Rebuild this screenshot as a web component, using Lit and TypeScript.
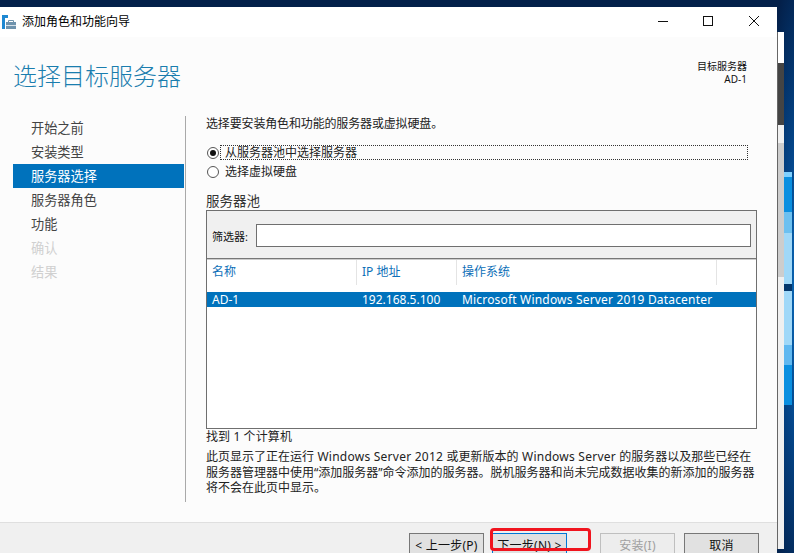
import { LitElement, html, css } from "lit";
import { customElement } from "lit/decorators.js";

const FONT = css`"Noto Sans", "Noto Sans CJK SC", sans-serif`;

@customElement("app-root")
export class AppRoot extends LitElement {
  static styles = css`
    :host {
      display: block;
      width: 794px;
      height: 553px;
      overflow: hidden;
      font-family: ${FONT};
      font-size: 12px;
      color: #222;
    }
    .desk {
      width: 794px;
      height: 553px;
      display: flex;
      align-items: flex-start;
      overflow: hidden;
      background:
        radial-gradient(ellipse 40px 330px at 800px 290px, #0a6fc0 0%, #04468a 45%, rgba(3, 32, 74, 0) 100%),
        #03204a;
    }
    .win {
      width: 777px;
      height: 546px;
      margin-top: 7px;
      flex: none;
      background: #fcfcfc;
      display: flex;
      flex-direction: column;
    }
    .titlebar {
      height: 30px;
      flex: none;
      background: #fff;
      display: flex;
      align-items: center;
      padding-left: 2px;
      color: #000;
    }
    .titlebar svg.app { margin-right: 6px; }
    .titlebar .t { flex: 1; line-height: 30px; }
    .ctrl { display: flex; }
    .ctrl svg { display: block; }
    .header {
      height: 79px;
      flex: none;
      display: flex;
      justify-content: space-between;
      padding: 0 30px 0 13px;
    }
    h1 {
      margin: 21px 0 0;
      font-weight: 300;
      font-size: 24px;
      line-height: 36px;
      color: #1a7dae;
    }
    .target {
      margin-top: 23px;
      text-align: right;
      font-size: 10px;
      line-height: 13px;
      color: #111;
    }
    .body { flex: 1; display: flex; min-height: 0; }
    .nav {
      width: 172px;
      margin-left: 13px;
      flex: none;
      height: 386px;
      border-right: 1px solid #a9a9a9;
    }
    .nav div {
      height: 24px;
      line-height: 25px;
      padding-left: 18px;
      font-size: 13.2px;
      width: 153px;
      color: #444;
    }
    .nav div.sel { background: #0072bc; color: #fff; }
    .nav div.off { color: #d0d0d0; }
    .main { width: 551px; margin-left: 20px; flex: none; padding-top: 1px; }
    .intro { height: 13px; line-height: 13px; letter-spacing: -0.15px; }
    .radios { margin-top: 15px; display: flex; flex-direction: column; gap: 4px; }
    .radio { display: flex; align-items: center; height: 15px; }
    .dot {
      width: 12px; height: 12px; border: 1px solid #555; border-radius: 50%;
      box-sizing: border-box; background: #fff; flex: none; margin: 0 6px 0 1px;
      display: flex; align-items: center; justify-content: center;
    }
    .dot i { width: 6px; height: 6px; border-radius: 50%; background: #111; display: block; }
    .radio .lbl { line-height: 13px; }
    .radio.focus .lbl {
      outline: 1px dotted #333;
      flex: 1;
      margin-left: -4px;
      margin-right: 10px;
      padding-left: 4px;
    }
    .pool-t { margin-top: 13px; font-size: 13.5px; line-height: 18px; color: #333; height: 18px; }
    .pool {
      height: 219px;
      box-sizing: border-box;
      border: 1px solid #6f6f6f;
      background: #fff;
      display: flex;
      flex-direction: column;
    }
    .filter {
      height: 48px; flex: none; background: #f0f0f0;
      display: flex; align-items: center; padding: 2px 5px 0;
      box-sizing: border-box;
      border-bottom: 1px solid #777;
    }
    .filter label { width: 44px; font-size: 11px; flex: none; color: #111; }
    .filter .inp { flex: 1; height: 23px; box-sizing: border-box; border: 1px solid #6f6f6f; background: #fff; }
    .thead {
      height: 33px; display: grid; grid-template-columns: 150px 100px 260px 1fr;
      border-top: 1px solid #ccc;
      flex: none;
      box-sizing: border-box;
    }
    .thead div {
      color: #0d6fb8; padding: 3px 0 0 5px; line-height: 18px; height: 22px;
      border-right: 1px solid #e4e4e4;
    }
    .thead div:last-child { border-right: none; }
    .row {
      height: 15px; line-height: 15px; background: #0072bc; color: #fff;
      display: grid; grid-template-columns: 150px 100px 1fr; flex: none;
    }
    .row span { padding-left: 5px; }
    .row span.os { letter-spacing: 0.18px; }
    .found { height: 15px; line-height: 15px; color: #222; letter-spacing: 0.1px; }
    .para { margin: 5px 0 0; line-height: 15.5px; width: 555px; white-space: nowrap; color: #222; }
    .para span { letter-spacing: 0.25px; }
    .foot {
      height: 31px; flex: none; margin-top: auto;
      background: #f0f0f0; border-top: 1px solid #dfdfdf;
      display: flex; padding: 10px 20px 0 409px; box-sizing: border-box;
    }
    .btn {
      width: 75px; height: 24px; box-sizing: border-box;
      border: 1px solid #777; background: #e1e1e1;
      text-align: center; line-height: 24px; color: #111; flex: none; letter-spacing: 0.25px;
    }
    .btn.next { margin-left: 8px; border-color: #0078d7; }
    .btn.dis { margin-left: 33px; border-color: #bfbfbf; background: #ededed; color: #a0a0a0; }
    .btn.cancel { margin-left: 9px; }
    .strip {
      width: 6px; flex: none; height: 517px; margin-top: 32px;
      border-left: 1px solid #666; display: flex; flex-direction: column;
    }
    .strip i { display: block; }
    .s1 { height: 31px; background: #fff; }
    .s2 { height: 62px; background: #444; }
    .s3 { height: 18px; background: #f0f0f0; }
    .s4 { height: 134px; background: #cdcdcd; }
    .s5 { flex: 1; background: #f0f0f0; }
    .logo {
      width: 8px; flex: none; margin-top: 172px; height: 233px;
      display: flex; flex-direction: column;
    }
    .logo i { display: block; }
    .l1 { height: 5px; background: #7fd0ff; }
    .l2 { height: 35px; background: #0a8fe0; }
    .l3 { height: 21px; background: #6cc0f0; }
    .l4 { height: 51px; background: #a0d8f8; }
    .l5 { height: 7px; background: #04376c; }
    .l6 { height: 54px; background: #a0d8f8; }
    .l7 { height: 20px; background: #60b8f0; }
    .l8 { height: 40px; background: #0a8fe0; }
    .mark {
      position: absolute; left: 490px; top: 528px; width: 101px; height: 23px;
      box-sizing: border-box; border: 3px solid #f0141e; border-radius: 4px;
      pointer-events: none;
    }
    .wrap { position: relative; width: 794px; height: 553px; }
  `;

  render() {
    return html`<div class="wrap"><div class="desk">
      <div class="win">
        <div class="titlebar">
          <svg class="app" width="14" height="14" viewBox="0 0 14 14">
            <path d="M0 0h6v3H3v11H0z" fill="#1e88d2"/>
            <rect x="4" y="7" width="10" height="7" fill="#6f93ad"/>
            <path d="M6.5 7V5.5h5V7" fill="none" stroke="#6f93ad"/>
            <rect x="4" y="10" width="10" height="1" fill="#d5e0e8"/>
          </svg>
          <span class="t">添加角色和功能向导</span>
          <div class="ctrl">
            <svg width="120" height="30" viewBox="0 0 120 30">
              <path d="M1 14.5h10" stroke="#111" fill="none"/>
              <rect x="46.5" y="9.5" width="9" height="9" fill="none" stroke="#111"/>
              <path d="M92 9l10 10M102 9L92 19" stroke="#111" fill="none"/>
            </svg>
          </div>
        </div>
        <div class="header">
          <h1>选择目标服务器</h1>
          <div class="target">目标服务器<br />AD-1</div>
        </div>
        <div class="body">
          <div class="nav">
            <div>开始之前</div>
            <div>安装类型</div>
            <div class="sel">服务器选择</div>
            <div>服务器角色</div>
            <div>功能</div>
            <div class="off">确认</div>
            <div class="off">结果</div>
          </div>
          <div class="main">
            <div class="intro">选择要安装角色和功能的服务器或虚拟硬盘。</div>
            <div class="radios">
              <div class="radio focus"><span class="dot"><i></i></span><span class="lbl">从服务器池中选择服务器</span></div>
              <div class="radio"><span class="dot"></span><span class="lbl">选择虚拟硬盘</span></div>
            </div>
            <div class="pool-t">服务器池</div>
            <div class="pool">
              <div class="filter"><label>筛选器:</label><div class="inp"></div></div>
              <div class="thead"><div>名称</div><div>IP 地址</div><div>操作系统</div><div></div></div>
              <div class="row"><span>AD-1</span><span>192.168.5.100</span><span class="os">Microsoft Windows Server 2019 Datacenter</span></div>
            </div>
            <div class="found">找到 1 个计算机</div>
            <p class="para">此页显示了正在运行<span> Windows Server 2012 </span>或更新版本的<span> Windows Server </span>的服务器以及那些已经在<br />服务器管理器中使用“添加服务器”命令添加的服务器。脱机服务器和尚未完成数据收集的新添加的服务器<br />将不会在此页中显示。</p>
          </div>
        </div>
        <div class="foot">
          <div class="btn">&lt; 上一步(P)</div>
          <div class="btn next">下一步(N) &gt;</div>
          <div class="btn dis">安装(I)</div>
          <div class="btn cancel">取消</div>
        </div>
      </div>
      <div class="strip"><i class="s1"></i><i class="s2"></i><i class="s3"></i><i class="s4"></i><i class="s5"></i></div>
      <div class="logo"><i class="l1"></i><i class="l2"></i><i class="l3"></i><i class="l4"></i><i class="l5"></i><i class="l6"></i><i class="l7"></i><i class="l8"></i></div>
    </div><div class="mark"></div></div>`;
  }
}
